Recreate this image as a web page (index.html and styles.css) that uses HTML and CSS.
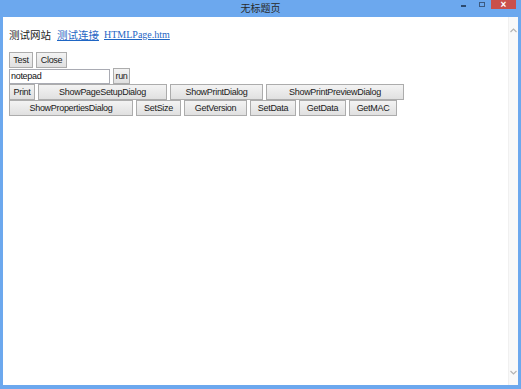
FILE: index.html
```html
<!DOCTYPE html>
<html lang="zh-CN">
<head>
    <meta charset="UTF-8">
    <title>无标题页</title>
    <link rel="stylesheet" href="styles.css">
</head>
<body>
    <div class="window">
        <div class="titlebar">
            <span></span>
            <span class="title">无标题页</span>
            <div class="controls">
                <span class="ctl min"><i></i></span>
                <span class="ctl max"><i></i></span>
                <span class="ctl close">&#215;</span>
            </div>
        </div>
        <div class="client">
            <div class="page">
                <p class="head">
                    <span>测试网站</span>
                    <a href="#">测试连接</a>
                    <a href="#" class="htm">HTMLPage.htm</a>
                </p>
                <div class="row">
                    <button class="w24">Test</button>
                    <button class="w31">Close</button>
                </div>
                <div class="row">
                    <input type="text" id="cmd" value="notepad">
                    <button class="w17">run</button>
                </div>
                <div class="row">
                    <button class="w26">Print</button>
                    <button class="w129">ShowPageSetupDialog</button>
                    <button class="w93">ShowPrintDialog</button>
                    <button class="w138">ShowPrintPreviewDialog</button>
                </div>
                <div class="row">
                    <button class="w124">ShowPropertiesDialog</button>
                    <button class="w45">SetSize</button>
                    <button class="w63">GetVersion</button>
                    <button class="w46">SetData</button>
                    <button class="w47">GetData</button>
                    <button class="w48">GetMAC</button>
                </div>
            </div>
            <div class="scrollbar">
                <svg width="7" height="5" viewBox="0 0 7 5"><polyline points="0.5,4 3.5,1 6.5,4" fill="none" stroke="#b4b4b4" stroke-width="1.2"/></svg>
                <svg width="7" height="5" viewBox="0 0 7 5"><polyline points="0.5,1 3.5,4 6.5,1" fill="none" stroke="#b4b4b4" stroke-width="1.2"/></svg>
            </div>
        </div>
    </div>
</body>
</html>
```

FILE: styles.css
```css
* {
    margin: 0;
    padding: 0;
    box-sizing: border-box;
}

body {
    width: 521px;
    height: 389px;
    overflow: hidden;
    font-family: "Liberation Sans", Arial, sans-serif;
}

.window {
    width: 521px;
    height: 389px;
    background: #6ca8ee;
    display: flex;
    flex-direction: column;
}

.titlebar {
    height: 17px;
    display: grid;
    grid-template-columns: 1fr auto 1fr;
}

.title {
    font-family: "Noto Sans CJK SC", sans-serif;
    font-size: 10px;
    line-height: 15px;
    color: #2a2a2a;
}

.controls {
    justify-self: end;
    display: flex;
    margin-right: 5px;
    height: 9px;
}

.ctl {
    height: 9px;
    display: flex;
    align-items: center;
    justify-content: center;
}

.min {
    width: 17px;
}

.min i {
    width: 5px;
    height: 2px;
    margin-top: 3px;
    background: #2c4a70;
}

.max {
    width: 19px;
}

.max i {
    width: 6px;
    height: 5px;
    margin-top: -1px;
    border: 1px solid #3c5a80;
}

.close {
    width: 25px;
    background: #c9504b;
    color: #fff;
    font-size: 10px;
    font-weight: bold;
    line-height: 9px;
}

.client {
    flex: 1;
    margin: 0 3px 4px 3px;
    background: #fff;
    display: flex;
}

.page {
    flex: 1;
    padding: 10px 6px 0 6px;
}

.head {
    display: flex;
    align-items: center;
    height: 14px;
    margin-bottom: 11px;
    font-family: "Noto Sans CJK SC", sans-serif;
    font-size: 10.5px;
    color: #1a1a1a;
}

.head a {
    color: #1f66c4;
    margin-left: 6px;
}

.head a.htm {
    font-family: "Liberation Serif", serif;
    font-size: 10px;
    margin-left: 5px;
}

.row {
    display: flex;
    gap: 3px;
    height: 16px;
    align-items: center;
}

button {
    height: 16px;
    border: 1px solid #acacac;
    background: linear-gradient(#f3f3f3, #e0e0e0);
    color: #1a1a1a;
    font-family: "Liberation Sans", Arial, sans-serif;
    font-size: 9px;
    letter-spacing: -0.3px;
    padding: 0;
}

#cmd {
    width: 101px;
    height: 15px;
    border: 1px solid #a9abb3;
    font-family: "Liberation Sans", Arial, sans-serif;
    font-size: 9px;
    letter-spacing: -0.3px;
    padding: 0 1px;
    color: #111;
}

.w17 { width: 17px; }
.w24 { width: 24px; }
.w26 { width: 26px; }
.w31 { width: 31px; }
.w45 { width: 45px; }
.w46 { width: 46px; }
.w47 { width: 47px; }
.w48 { width: 48px; }
.w63 { width: 63px; }
.w93 { width: 93px; }
.w124 { width: 124px; }
.w129 { width: 129px; }
.w138 { width: 138px; }

.scrollbar {
    width: 10px;
    background: #f9f9f9;
    border-left: 1px solid #f0f0f0;
    display: flex;
    flex-direction: column;
    justify-content: space-between;
    align-items: center;
    padding: 11px 0 10px 0;
}
```
